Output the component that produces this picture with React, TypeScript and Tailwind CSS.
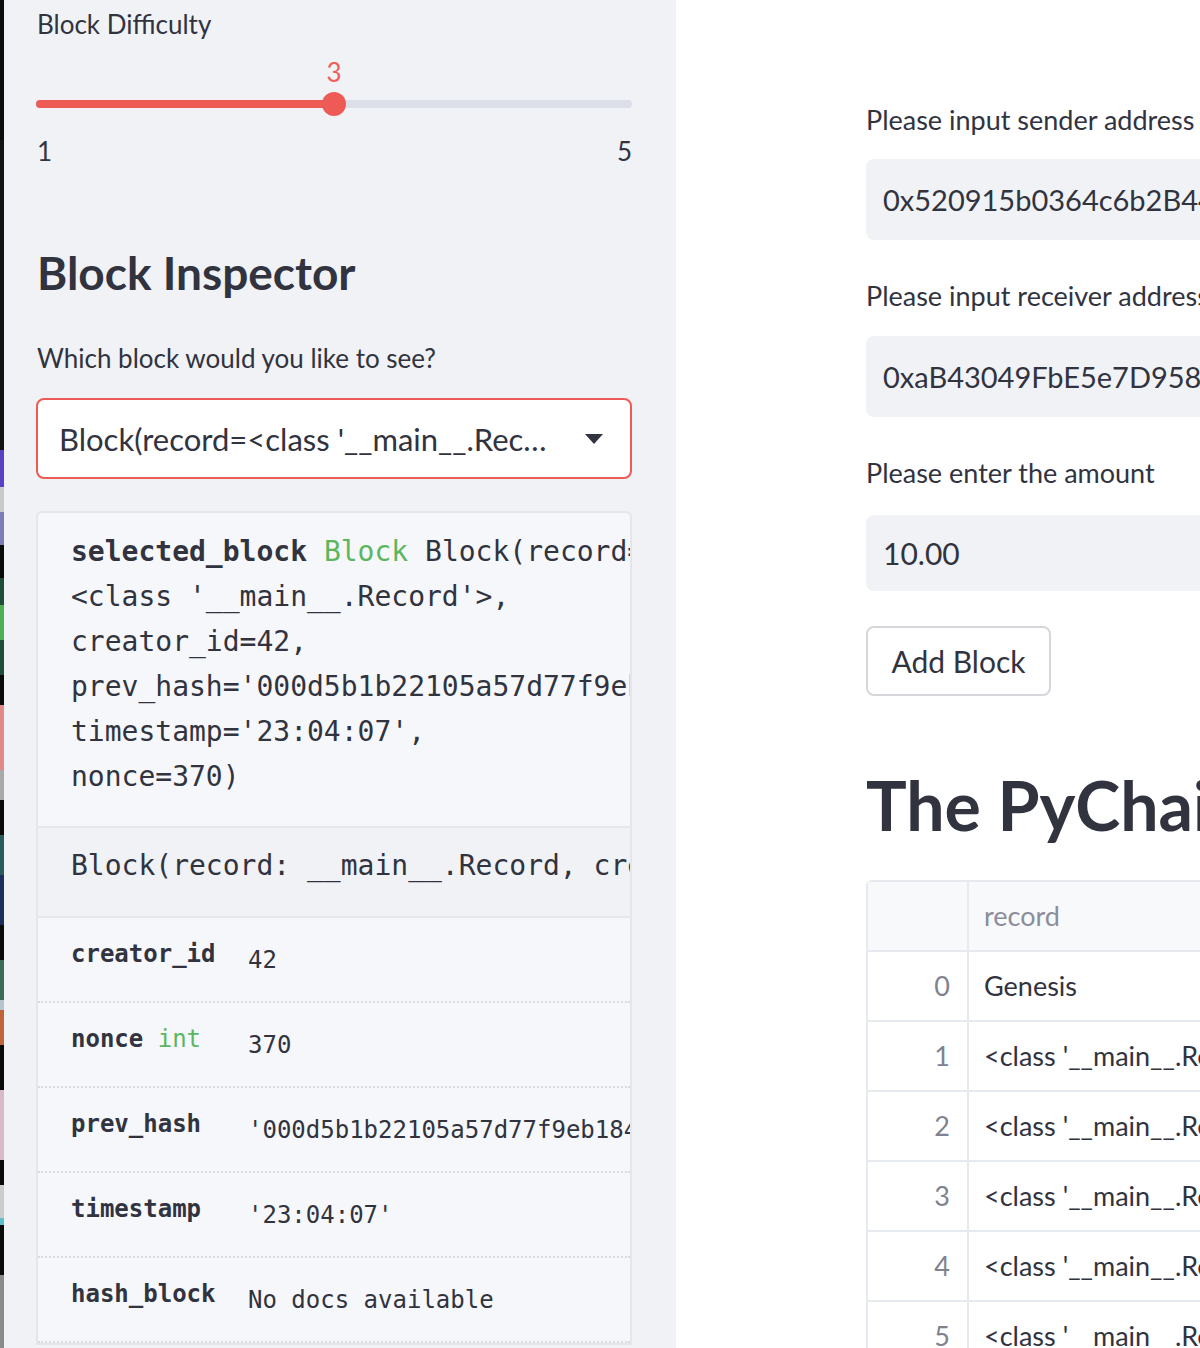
import React from "react";

const strip: [number, string][] = [
  [140, "#0b0b0b"],
  [310, "#121212"],
  [37, "#5a40c2"],
  [25, "#c9c9c9"],
  [33, "#7b7cb8"],
  [33, "#0a0a0a"],
  [27, "#1f4d3a"],
  [35, "#4caf50"],
  [35, "#1f4d3a"],
  [30, "#0a0a0a"],
  [65, "#e08a8a"],
  [30, "#a9a9a9"],
  [35, "#0a0a0a"],
  [40, "#2a5a5a"],
  [50, "#1e2e5a"],
  [35, "#0a0a0a"],
  [40, "#3b6a55"],
  [10, "#b8c4cc"],
  [35, "#c0653a"],
  [45, "#0a0a0a"],
  [70, "#d9b8c8"],
  [25, "#0a0a0a"],
  [33, "#cccccc"],
  [7, "#5fc0c8"],
  [50, "#0a0a0a"],
  [73, "#8a8a8a"],
];

const codeLines = [
  null,
  "<class '__main__.Record'>,",
  "creator_id=42,",
  "prev_hash='000d5b1b22105a57d77f9eb184a3c1f0e2b7d9',",
  "timestamp='23:04:07',",
  "nonce=370)",
];

const rows: { name: string; type?: string; value: string }[] = [
  { name: "creator_id", value: "42" },
  { name: "nonce", type: "int", value: "370" },
  { name: "prev_hash", value: "'000d5b1b22105a57d77f9eb184a3c1f0e2b7d9'" },
  { name: "timestamp", value: "'23:04:07'" },
  { name: "hash_block", value: "No docs available" },
];

const tableRows = [
  "Genesis",
  "<class '__main__.Record'>",
  "<class '__main__.Record'>",
  "<class '__main__.Record'>",
  "<class '__main__.Record'>",
  "<class '__main__.Record'>",
];

export default function App() {
  return (
    <div className="flex w-[1200px] h-[1348px] overflow-hidden text-[#31333f] [font-family:Lato,sans-serif]">
      {/* left desktop strip */}
      <div className="w-[4px] shrink-0 flex flex-col overflow-hidden">
        {strip.map(([h, c], i) => (
          <div key={i} className="w-full shrink-0" style={{ height: h, background: c }} />
        ))}
      </div>

      {/* sidebar */}
      <div className="w-[672px] shrink-0 bg-[#f0f2f6] pl-[32px] pr-[44px] overflow-hidden">
        <div className="mt-[6px] h-[36px] leading-[36px] text-[26px] pl-[1px]">Block Difficulty</div>

        <div className="relative h-[140px]">
          <div className="absolute left-[298px] top-[16px] -translate-x-1/2 text-[26px] leading-[28px] text-[#f0605a]">3</div>
          <div className="absolute left-0 top-[58px] h-[8px] w-[596px] rounded-full bg-[#dcdfe7]" />
          <div className="absolute left-0 top-[58px] h-[8px] w-[298px] rounded-full bg-[#ee5a55]" />
          <div className="absolute left-[286px] top-[50px] w-[24px] h-[24px] rounded-full bg-[#ee5a55]" />
          <div className="absolute left-[1px] top-[95px] text-[26px] leading-[28px]">1</div>
          <div className="absolute right-0 top-[95px] text-[26px] leading-[28px]">5</div>
        </div>

        <div className="mt-[63px] h-[56px] leading-[56px] text-[46px] font-bold pl-[1px]">Block Inspector</div>

        <div className="mt-[39px] h-[36px] leading-[36px] text-[26px] pl-[1px]">Which block would you like to see?</div>

        <div className="mt-[22px] h-[81px] rounded-[8px] border-2 border-[#ee5a55] bg-white flex items-center pl-[21px] pr-[27px]">
          <div className="w-[490px] truncate text-[31px] leading-[40px] whitespace-nowrap">
            Block(record=&lt;class '__main__.Record'&gt;, creator_id=42)
          </div>
          <div className="flex-1" />
          <svg width="18" height="10" viewBox="0 0 18 10">
            <path d="M0 0 L18 0 L9 10 Z" fill="#31333f" />
          </svg>
        </div>

        <div className="mt-[32px] border-2 border-[#e4e6ec] rounded-t-[6px] bg-[#f6f7fa] overflow-hidden [font-family:'DejaVu_Sans_Mono',monospace]">
          <div className="pl-[33px] pt-[16px] pb-[27px] text-[28px] leading-[45px] whitespace-nowrap">
            {codeLines.map((l, i) =>
              l === null ? (
                <div key={i}>
                  <span className="font-bold">selected_block</span>{" "}
                  <span className="text-[#5cb660]">Block</span> Block(record=
                </div>
              ) : (
                <div key={i}>{l}</div>
              )
            )}
          </div>
          <div className="border-y-2 border-[#e4e6ec] bg-[#f0f2f6] h-[92px] pl-[33px] pt-[20px] text-[28px] leading-[36px] whitespace-nowrap">
            Block(record: __main__.Record, creator_id: int, prev_hash: str)
          </div>
          {rows.map((r) => (
            <div key={r.name} className="flex h-[85px] border-b-2 border-dotted border-[#d8dbe2] pl-[33px] whitespace-nowrap">
              <div className="w-[177px] shrink-0 pt-[21px] text-[24px] leading-[30px]">
                <span className="font-bold">{r.name}</span>
                {r.type && <span className="text-[#5cb660]"> {r.type}</span>}
              </div>
              <div className="pt-[27px] text-[24px] leading-[30px]">{r.value}</div>
            </div>
          ))}
        </div>
      </div>

      {/* main */}
      <div className="flex-1 bg-white overflow-hidden pl-[190px]">
        <div className="w-[820px]">
          <div className="mt-[102px] h-[36px] leading-[36px] text-[27px]">Please input sender address</div>
          <div className="mt-[21px] h-[81px] rounded-[8px] bg-[#f0f2f6] pl-[17px] flex items-center text-[29px] whitespace-nowrap">
            0x520915b0364c6b2B4412aF9e3D1C77b0e8F5aA21
          </div>
          <div className="mt-[38px] h-[36px] leading-[36px] text-[27px]">Please input receiver address</div>
          <div className="mt-[22px] h-[81px] rounded-[8px] bg-[#f0f2f6] pl-[17px] flex items-center text-[29px] whitespace-nowrap">
            0xaB43049FbE5e7D958643c1D2e0A9b7F6c5E4d3B2
          </div>
          <div className="mt-[38px] h-[36px] leading-[36px] text-[27px]">Please enter the amount</div>
          <div className="mt-[24px] h-[76px] rounded-[8px] bg-[#f0f2f6] pl-[17px] flex items-center text-[30px]">10.00</div>
          <div className="mt-[35px] h-[70px] w-[185px] rounded-[8px] border-2 border-[#d6d7dc] bg-white flex items-center justify-center text-[30px]">
            Add Block
          </div>
          <div className="mt-[69px] h-[80px] leading-[80px] text-[68px] font-bold whitespace-nowrap">The PyChain Ledger</div>

          <div className="mt-[35px] border-2 border-r-0 border-[#e6e9ef] rounded-tl-[6px] text-[27px]">
            <div className="flex h-[70px] bg-[#f8f9fb] border-b-2 border-[#e6e9ef]">
              <div className="w-[101px] shrink-0 border-r-2 border-[#e6e9ef]" />
              <div className="pl-[15px] flex items-center text-[#8b8e9a]">record</div>
            </div>
            {tableRows.map((t, i) => (
              <div key={i} className="flex h-[70px] border-b-2 border-[#e6e9ef]">
                <div className="w-[101px] shrink-0 border-r-2 border-[#e6e9ef] flex items-center justify-end pr-[17px] text-[#80838f]">
                  {i}
                </div>
                <div className="pl-[15px] flex items-center whitespace-nowrap">{t}</div>
              </div>
            ))}
          </div>
        </div>
      </div>
    </div>
  );
}
